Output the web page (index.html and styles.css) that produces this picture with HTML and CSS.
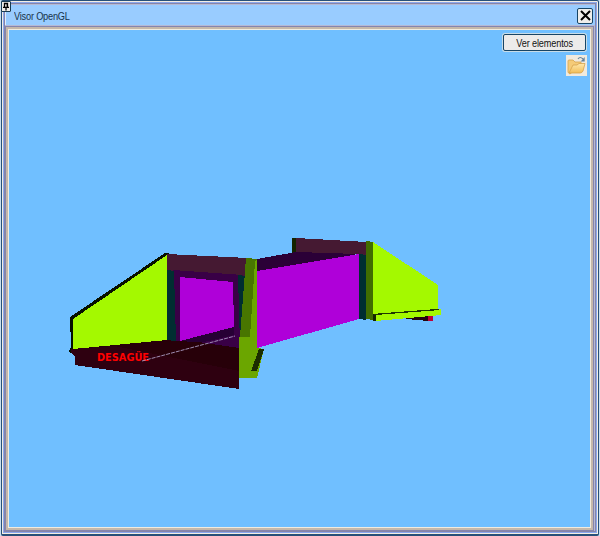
FILE: index.html
```html
<!DOCTYPE html>
<html lang="es">
<head>
<meta charset="utf-8">
<title>Visor OpenGL</title>
<link rel="stylesheet" href="styles.css">
</head>
<body>
<div class="window">
  <div class="frame">
    <header class="titlebar">
      <span class="title">Visor OpenGL</span>
      <button class="close" aria-label="Cerrar"><svg width="11" height="11" viewBox="0 0 11 11"><path d="M1 1L10 10M10 1L1 10" stroke="#000" stroke-width="2"/></svg></button>
    </header>
    <main class="viewport">
      <svg class="scene" width="600" height="536" viewBox="0 0 600 536">
        <g shape-rendering="crispEdges">
          <path fill="#142400" d="M292 238L297 238V254L292 255Z"/>
          <path fill="#451932" d="M296 238L367 242V255L300 252L296 253Z"/>
          <path fill="#2b0037" d="M257 259L296 252L358 254L257 272Z"/>
          <path fill="#af00d9" d="M257 271L359 254V319L257 348Z"/>
          <path fill="#002e31" d="M359 254L367 255L366 320L359 319Z"/>
          <path fill="#416d00" d="M366 241L373 242V320L366 319Z"/>
          <path fill="#a4f900" d="M373 242L438 285V310L373 316Z"/>
          <path fill="#240610" d="M403 318L430 316V321L415 320Z"/>
          <path fill="#bf0038" d="M428 316H433V321H428Z"/>
          <path fill="#142400" d="M373 314H377V321H373Z"/>
          <path fill="#a4f900" d="M376 315L441 309V315L376 321Z"/>
          <path d="M374 314.5L439 309.5" stroke="#203800" stroke-width="1.3"/>
          <path fill="#071000" d="M165 253H169L168 257L74 319V349L71 354L69 351L71 347L70 317Z"/>
          <path fill="#a4f900" d="M167 255V340L73 349V319Z"/>
          <path fill="#451932" d="M167 254L248 258V276L167 271Z"/>
          <path fill="#390046" d="M173 270L243 275V349L173 341Z"/>
          <path fill="#002e31" d="M167 270L174 271L176 341H167Z"/>
          <path fill="#002e31" d="M238 275L246 276L242 335L240 345Z"/>
          <path fill="#af00d9" d="M180 277L233 282L234 327L180 341Z"/>
          <path fill="#270035" d="M180 341L234 327V335L200 343Z"/>
          <path fill="#270009" d="M73 349L167 340L175 341L199 342L218 345L239 348V371Z"/>
          <path fill="#2e0010" d="M71 349L115 346L239 371V389L75 365V357L71 352Z"/>
          <path fill="#6ba600" d="M253 259L257 260V348L264 349L257 378H239V337H249Z"/>
          <path fill="#487600" d="M246 258L257 259L255 262L250 337H240Z"/>
          <path fill="#1b2d00" d="M259 349H264L257 371H251Z"/>
        </g>
        <text class="label" x="97" y="361" textLength="52" lengthAdjust="spacingAndGlyphs">DESAGÜE</text>
        <path d="M142 361L235 336" stroke="#aa9cc3" stroke-width=".9" stroke-dasharray="4 1"/>
      </svg>
      <div class="tools">
        <button class="elements"><span>Ver elementos</span></button>
        <button class="open" aria-label="Abrir"><svg width="21" height="21" viewBox="0 0 21 21">
          <defs><linearGradient id="folder" x2="0" y2="1"><stop stop-color="#ffe8ac"/><stop offset="1" stop-color="#f1bd57"/></linearGradient></defs>
          <path fill="#f5cb78" stroke="#d5a24d" stroke-width=".8" d="M2 6Q2 5 3 5H7L9 7H15V10L4 19Q2 18 2 17Z"/>
          <path fill="url(#folder)" stroke="#d5a24d" stroke-width=".8" d="M6 12L7 10H11L13 8.5H19L17 16Q16 18 14 18H3Z"/>
          <path fill="none" stroke="#64829c" stroke-width="1.2" d="M12 4Q14 1 17 4"/>
          <path fill="#64829c" d="M18.7 2V6.5H14.7Z"/>
        </svg></button>
      </div>
    </main>
  </div>
  <div class="pin"><svg width="8" height="9" viewBox="0 0 8 9"><path fill="none" stroke="#000" stroke-width="1.3" d="M2.5 5V1.5H5.5V5M1 5.3H7M4 5.5V8.5"/><path stroke="#000" d="M5.2 2V5"/></svg></div>
</div>
</body>
</html>
```
FILE: styles.css
```css
* { box-sizing: border-box; }

body {
  margin: 0;
  width: 600px;
  height: 536px;
  overflow: hidden;
  background: #c8dff0;
  font-family: "Liberation Sans", Arial, sans-serif;
}

button { margin: 0; padding: 0; }

.window {
  position: relative;
  width: 600px;
  height: 536px;
  padding: 0 1px;
}

.frame {
  display: flex;
  flex-direction: column;
  height: 536px;
  padding: 4px 3px 2px 3px;
  border: 1px solid #285078;
  border-bottom-width: 2px;
  border-radius: 2px;
  background: #b5b9d4;
  box-shadow: inset 0 0 0 1px #f3eee3, inset 0 0 0 2px #8ba7ef, inset 0 0 0 3px #8585a8;
}

.titlebar {
  display: flex;
  align-items: center;
  justify-content: space-between;
  height: 20px;
  padding: 1px 2px 0 8px;
  border-left: 1px solid #e0edff;
  background: #99ccff;
}

.title {
  transform: scaleX(.88);
  transform-origin: left;
  color: #17324a;
  font-size: 10.5px;
  letter-spacing: -.25px;
}

.close {
  display: grid;
  place-items: center;
  width: 16px;
  height: 16px;
  border: 1px solid #174566;
  border-radius: 2px;
  background: #f0eeea;
}

.viewport {
  position: relative;
  flex: 1;
  min-height: 0;
  margin: 1px 1px 1px 0;
  padding: 6px 3px;
  border: 1px solid #8585ae;
  background: #70bfff;
  box-shadow: inset 0 0 0 2px #c5b8aa, inset 0 0 0 3px #f0ebdf;
}

.scene {
  position: absolute;
  left: -6px;
  top: -27px;
}

.tools {
  position: relative;
  display: flex;
  flex-direction: column;
  align-items: flex-end;
  gap: 3px;
  padding: 1px 3px 0 0;
}

.elements {
  width: 83px;
  height: 17px;
  margin: 0 1px 1px 0;
  border: 1px solid #174566;
  border-radius: 2px;
  background: #ecebea;
  box-shadow: 0 0 0 1px #c8dce7;
  color: #111;
  font: 10.5px "Liberation Sans", Arial, sans-serif;
  letter-spacing: -.15px;
}

.elements span {
  display: inline-block;
  margin: 0 -6px;
  transform: scaleX(.87);
}

.open {
  width: 21px;
  height: 21px;
  border: 0;
  background: #f0eade;
}

.open svg, .pin svg { display: block; }

.label {
  fill: #ff0000;
  font: bold 10px "DejaVu Sans", sans-serif;
}

.pin {
  position: absolute;
  left: 1px;
  top: 1px;
  width: 10px;
  height: 11px;
  border: 1px solid #183b52;
  border-radius: 1px;
  background: #f0eeea;
}
```
